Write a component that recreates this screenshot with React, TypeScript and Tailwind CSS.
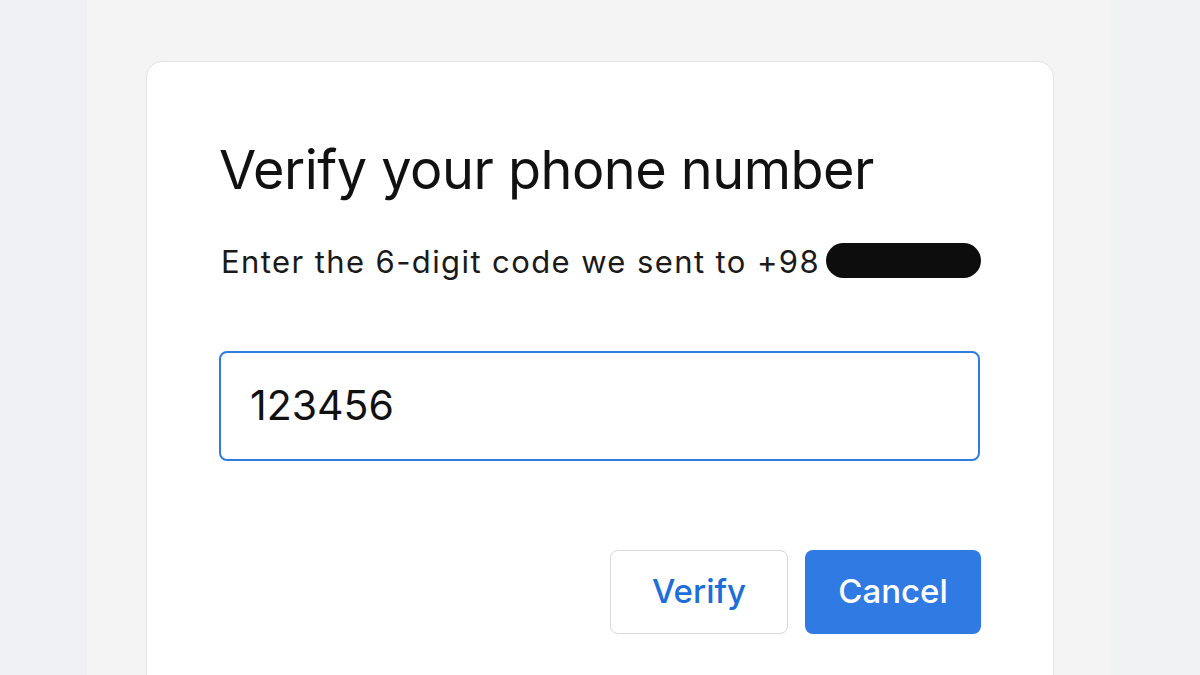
export default function App() {
  return (
    <div
      className="flex h-[675px] w-[1200px] overflow-hidden"
      style={{ fontFamily: "Inter, 'Open Sans', sans-serif" }}
    >
      <div className="w-[88px] bg-[#eff0f4]" />
      <div className="flex-1 bg-[#f4f4f4] pl-[59px] pr-[57px] pt-[61px]">
        <div className="h-[700px] rounded-t-[16px] border border-[#e3e3e3] bg-white pl-[72px] pr-[72px] pt-[76px]">
          <h1 className="text-[54px] leading-[64px] font-normal tracking-[-0.5px] text-[#111]">
            Verify your phone number
          </h1>
          <div className="mt-[42px] flex items-center">
            <p className="pl-[2px] text-[31px] leading-[36px] tracking-[1.4px] text-[#1a1a1a]">
              Enter the 6-digit code we sent to +98
            </p>
            <span className="-mt-[4px] ml-[6px] h-[35px] w-[155px] rounded-full bg-[#0d0d0d]" />
          </div>
          <div className="mt-[71px] flex h-[110px] w-[761px] items-center rounded-[8px] border-[2.5px] border-[#2f7de1] pl-[29px]">
            <span className="text-[41px] text-[#111]">123456</span>
          </div>
          <div className="mt-[89px] flex w-[762px] justify-end gap-[17px]">
            <button className="h-[84px] w-[178px] rounded-[8px] border border-[#d9d9d9] bg-white text-[33px] font-medium text-[#1c6fd9]">
              Verify
            </button>
            <button className="h-[84px] w-[176px] rounded-[8px] bg-[#2f7be3] text-[33px] font-medium text-white">
              Cancel
            </button>
          </div>
        </div>
      </div>
      <div className="w-[90px] bg-[#f1f2f4]" />
    </div>
  );
}
